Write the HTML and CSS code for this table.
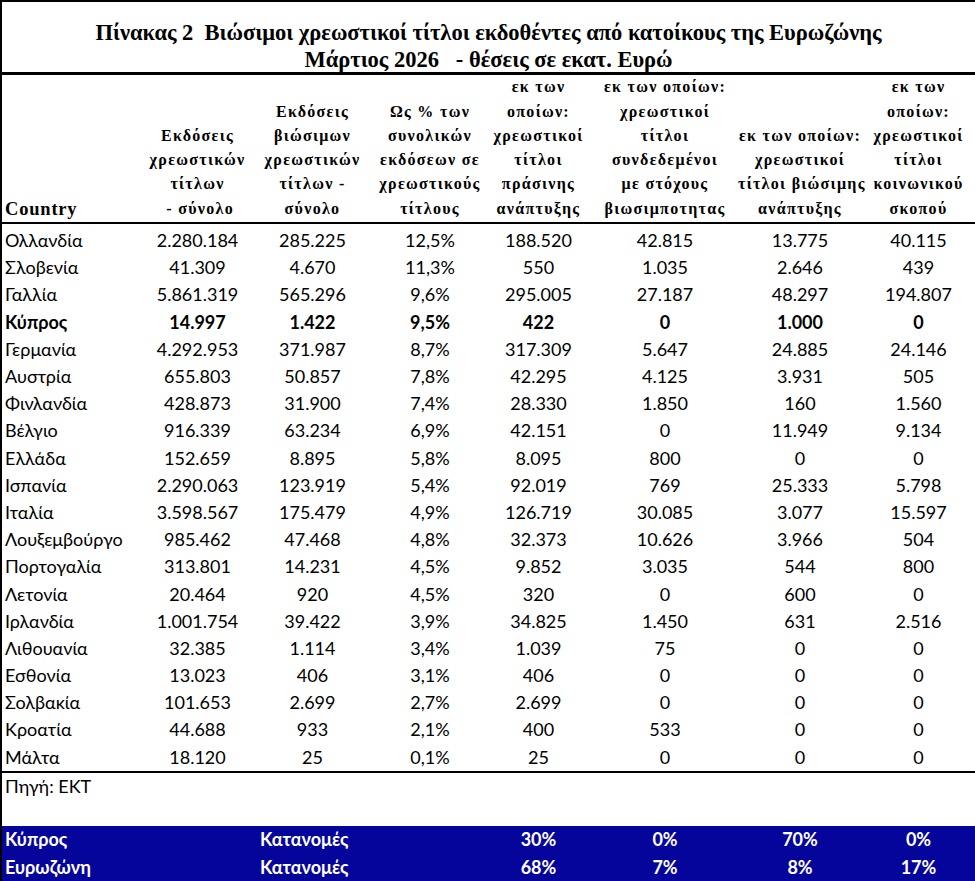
FILE: index.html
```html
<!DOCTYPE html>
<html lang="el">
<head>
  <meta charset="UTF-8" />
  <meta name="viewport" content="width=device-width, initial-scale=1.0" />
  <title>Πίνακας 2 - Βιώσιμοι χρεωστικοί τίτλοι</title>
  <link rel="stylesheet" href="styles.css">
</head>
<body>
  <div class="sheet">
    <div class="sheet-title">
      <div>Πίνακας 2&nbsp; Βιώσιμοι χρεωστικοί τίτλοι εκδοθέντες από κατοίκους της Ευρωζώνης</div>
      <div>Μάρτιος 2026 &nbsp; - θέσεις σε εκατ. Ευρώ</div>
    </div>

    <table class="bonds">
      <colgroup>
        <col class="c-country">
        <col class="c-1">
        <col class="c-2">
        <col class="c-3">
        <col class="c-4">
        <col class="c-5">
        <col class="c-6">
        <col class="c-7">
      </colgroup>
      <thead>
        <tr>
          <th class="country-head">Country</th>
          <th>Εκδόσεις<br>χρεωστικών<br>τίτλων<br>&nbsp;- σύνολο</th>
          <th>Εκδόσεις<br>βιώσιμων<br>χρεωστικών<br>τίτλων -<br>σύνολο</th>
          <th>Ως % των<br>συνολικών<br>εκδόσεων σε<br>χρεωστικούς<br>τίτλους</th>
          <th>εκ των<br>οποίων:<br>χρεωστικοί<br>τίτλοι<br>πράσινης<br>ανάπτυξης</th>
          <th>εκ των οποίων:<br>χρεωστικοί<br>τίτλοι<br>συνδεδεμένοι<br>με στόχους<br>βιωσιμποτητας</th>
          <th>εκ των οποίων:<br>χρεωστικοί<br>τίτλοι βιώσιμης<br>ανάπτυξης</th>
          <th>εκ των<br>οποίων:<br>χρεωστικοί<br>τίτλοι<br>κοινωνικού<br>σκοπού</th>
        </tr>
      </thead>
      <tbody id="rows"></tbody>
      <tbody>
        <tr class="source">
          <td colspan="8">Πηγή: ΕΚΤ</td>
        </tr>
        <tr class="spacer">
          <td colspan="8"></td>
        </tr>
        <tr class="share">
          <td>Κύπρος</td>
          <td></td>
          <td class="label">Κατανομές</td>
          <td></td>
          <td>30%</td>
          <td>0%</td>
          <td>70%</td>
          <td>0%</td>
        </tr>
        <tr class="share">
          <td>Ευρωζώνη</td>
          <td></td>
          <td class="label">Κατανομές</td>
          <td></td>
          <td>68%</td>
          <td>7%</td>
          <td>8%</td>
          <td>17%</td>
        </tr>
      </tbody>
    </table>
  </div>

  <script>
    const data = [
      ['Ολλανδία', '2.280.184', '285.225', '12,5%', '188.520', '42.815', '13.775', '40.115'],
      ['Σλοβενία', '41.309', '4.670', '11,3%', '550', '1.035', '2.646', '439'],
      ['Γαλλία', '5.861.319', '565.296', '9,6%', '295.005', '27.187', '48.297', '194.807'],
      ['Κύπρος', '14.997', '1.422', '9,5%', '422', '0', '1.000', '0'],
      ['Γερμανία', '4.292.953', '371.987', '8,7%', '317.309', '5.647', '24.885', '24.146'],
      ['Αυστρία', '655.803', '50.857', '7,8%', '42.295', '4.125', '3.931', '505'],
      ['Φινλανδία', '428.873', '31.900', '7,4%', '28.330', '1.850', '160', '1.560'],
      ['Βέλγιο', '916.339', '63.234', '6,9%', '42.151', '0', '11.949', '9.134'],
      ['Ελλάδα', '152.659', '8.895', '5,8%', '8.095', '800', '0', '0'],
      ['Ισπανία', '2.290.063', '123.919', '5,4%', '92.019', '769', '25.333', '5.798'],
      ['Ιταλία', '3.598.567', '175.479', '4,9%', '126.719', '30.085', '3.077', '15.597'],
      ['Λουξεμβούργο', '985.462', '47.468', '4,8%', '32.373', '10.626', '3.966', '504'],
      ['Πορτογαλία', '313.801', '14.231', '4,5%', '9.852', '3.035', '544', '800'],
      ['Λετονία', '20.464', '920', '4,5%', '320', '0', '600', '0'],
      ['Ιρλανδία', '1.001.754', '39.422', '3,9%', '34.825', '1.450', '631', '2.516'],
      ['Λιθουανία', '32.385', '1.114', '3,4%', '1.039', '75', '0', '0'],
      ['Εσθονία', '13.023', '406', '3,1%', '406', '0', '0', '0'],
      ['Σολβακία', '101.653', '2.699', '2,7%', '2.699', '0', '0', '0'],
      ['Κροατία', '44.688', '933', '2,1%', '400', '533', '0', '0'],
      ['Μάλτα', '18.120', '25', '0,1%', '25', '0', '0', '0']
    ];

    const body = document.getElementById('rows');
    data.forEach(function(row) {
      const tr = document.createElement('tr');
      if (row[0] === 'Κύπρος') tr.className = 'highlight';
      row.forEach(function(value) {
        const td = document.createElement('td');
        td.textContent = value;
        tr.appendChild(td);
      });
      body.appendChild(tr);
    });
  </script>
</body>
</html>
```

FILE: styles.css
```css
:root {
  --ink: #000;
  --navy: #05059c;
  --serif: 'Liberation Serif', 'Times New Roman', serif;
  --sans: Lato, 'Open Sans', sans-serif;
}

body {
  margin: 0;
  padding: 0;
  background: #fff;
  color: var(--ink);
  font-family: var(--sans);
  overflow: hidden;
}

.sheet {
  width: 975px;
  height: 881px;
  border-top: 2px solid var(--ink);
  border-left: 2px solid var(--ink);
  box-sizing: border-box;
  overflow: hidden;
}

.sheet-title {
  font-family: var(--serif);
  font-weight: bold;
  font-size: 22.5px;
  line-height: 27px;
  text-align: center;
  padding-top: 17px;
  height: 53px;
  border-bottom: 3px solid var(--ink);
}

.bonds {
  width: 973px;
  border-collapse: collapse;
  table-layout: fixed;
  font-size: 18px;
}

.c-country { width: 143px; }
.c-1 { width: 105px; }
.c-2 { width: 125px; }
.c-3 { width: 110px; }
.c-4 { width: 107px; }
.c-5 { width: 146px; }
.c-6 { width: 124px; }
.c-7 { width: 113px; }

.bonds th {
  font-family: var(--serif);
  font-size: 16px;
  letter-spacing: 1.3px;
  line-height: 24.3px;
  font-weight: bold;
  text-align: center;
  vertical-align: bottom;
  white-space: nowrap;
  padding: 0 0 1px;
  height: 146px;
  border-bottom: 2px solid var(--ink);
}

.bonds th.country-head {
  text-align: left;
  font-size: 18.5px;
  letter-spacing: 0.8px;
  padding-left: 3px;
}

.bonds td {
  height: 27.2px;
  padding: 0;
  text-align: center;
  white-space: nowrap;
  line-height: 27px;
}

.bonds td:first-child {
  text-align: left;
  padding-left: 3px;
}

#rows tr:first-child td {
  padding-top: 3px;
}

#rows tr:last-child td {
  border-bottom: 2px solid var(--ink);
}

.highlight td {
  font-weight: bold;
}

.source td {
  height: 28px;
}

.spacer td {
  height: 25px;
}

.share td {
  background: var(--navy);
  color: #fff;
  font-weight: bold;
  height: 27.5px;
}

.share td.label {
  text-align: left;
  padding-left: 10px;
}
```
